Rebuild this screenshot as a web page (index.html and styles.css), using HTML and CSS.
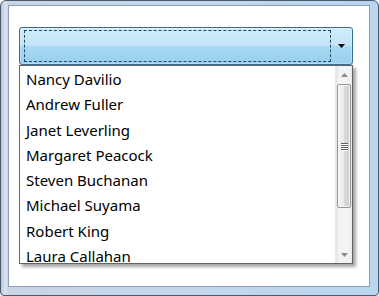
FILE: index.html
```html
<!DOCTYPE html>
<html>
<head>
<meta charset="utf-8">
<link rel="stylesheet" href="styles.css">
</head>
<body>
<div class="window">
  <div class="client">
    <div class="combo-wrap">
      <div class="combo">
        <div class="combo-focus"></div>
        <div class="combo-btn">
          <svg width="7" height="4" viewBox="0 0 7 4"><path d="M0 0H7L3.5 4Z" fill="#000"/></svg>
        </div>
      </div>
      <div class="popup">
        <ul class="items">
          <li>Nancy Davilio</li>
          <li>Andrew Fuller</li>
          <li>Janet Leverling</li>
          <li>Margaret Peacock</li>
          <li>Steven Buchanan</li>
          <li>Michael Suyama</li>
          <li>Robert King</li>
          <li>Laura Callahan</li>
        </ul>
        <div class="scrollbar">
          <div class="sb-arrow">
            <svg width="7" height="4" viewBox="0 0 7 4"><path d="M0 4H7L3.5 0Z" fill="#8a8a8a"/></svg>
          </div>
          <div class="sb-track">
            <div class="sb-thumb">
              <div class="grip"><span></span><span></span><span></span><span></span></div>
            </div>
          </div>
          <div class="sb-arrow">
            <svg width="7" height="4" viewBox="0 0 7 4"><path d="M0 0H7L3.5 4Z" fill="#8a8a8a"/></svg>
          </div>
        </div>
      </div>
    </div>
  </div>
</div>
</body>
</html>
```
FILE: styles.css
```css
* { box-sizing: border-box; }
html, body { margin: 0; padding: 0; }
body {
  width: 379px;
  height: 296px;
  overflow: hidden;
  font-family: "Noto Sans", "Open Sans", sans-serif;
  background: #fff;
}
.window {
  width: 379px;
  height: 296px;
  border: 1px solid #4a5a6c;
  border-radius: 6px 6px 4px 4px;
  background: linear-gradient(90deg, #b9c7d6 0px, #d9e2ec 4px, #c7d5e4 8px, #c3d7ec 50%, #b9d5f0 100%);
  padding: 4px 8px 8px 7px;
}
.client {
  width: 100%;
  height: 100%;
  background: #fff;
  border: 1px solid #8a9fb5;
  padding: 21px 0 0 10px;
}
.combo-wrap {
  position: relative;
  width: 334px;
}
.combo {
  height: 38px;
  border: 1px solid #3c6e93;
  border-radius: 3px;
  background: linear-gradient(180deg, #d2ecfa 0%, #c3e4f6 48%, #a7d8f2 52%, #98d0ef 100%);
  display: flex;
  align-items: stretch;
  padding: 2px 1px 2px 4px;
  box-shadow: inset 0 0 0 1px rgba(255,255,255,0.25);
}
.combo-focus {
  flex: 1;
  border: 1px dashed #1f4a66;
}
.combo-btn {
  width: 20px;
  display: flex;
  align-items: center;
  justify-content: center;
  padding-left: 1px;
}
.combo-btn svg { display: block; }
.popup {
  position: absolute;
  left: 0;
  top: 38px;
  width: 334px;
  height: 199px;
  background: #fff;
  border: 1px solid #646464;
  box-shadow: 3px 3px 3px rgba(0,0,0,0.35);
  display: flex;
}
.items {
  list-style: none;
  margin: 0;
  padding: 1px 0 0 6px;
  flex: 1;
  overflow: hidden;
  font-size: 15px;
  color: #000;
}
.items li {
  height: 25.3px;
  line-height: 25.3px;
  white-space: nowrap;
}
.scrollbar {
  width: 17px;
  display: flex;
  flex-direction: column;
  background: linear-gradient(90deg, #e3e3e3 0px, #f3f3f3 3px, #f3f3f3 13px, #e6e6e6 17px);
  border-left: 1px solid #e8e8e8;
}
.sb-arrow {
  height: 17px;
  display: flex;
  align-items: center;
  justify-content: center;
}
.sb-arrow svg { display: block; }
.sb-track {
  flex: 1;
  padding: 1px 1px;
}
.sb-thumb {
  height: 124px;
  border: 1px solid #969696;
  border-radius: 2px;
  background: linear-gradient(90deg, #f2f2f2 0%, #ebebeb 45%, #d9d9d9 55%, #cfcfcf 100%);
  box-shadow: inset 0 0 0 1px rgba(255,255,255,0.7);
  display: flex;
  align-items: center;
  justify-content: center;
}
.grip {
  display: flex;
  flex-direction: column;
  gap: 1px;
}
.grip span {
  display: block;
  width: 7px;
  height: 1px;
  background: #5f5f5f;
  box-shadow: 0 1px 0 #fff;
}
```
